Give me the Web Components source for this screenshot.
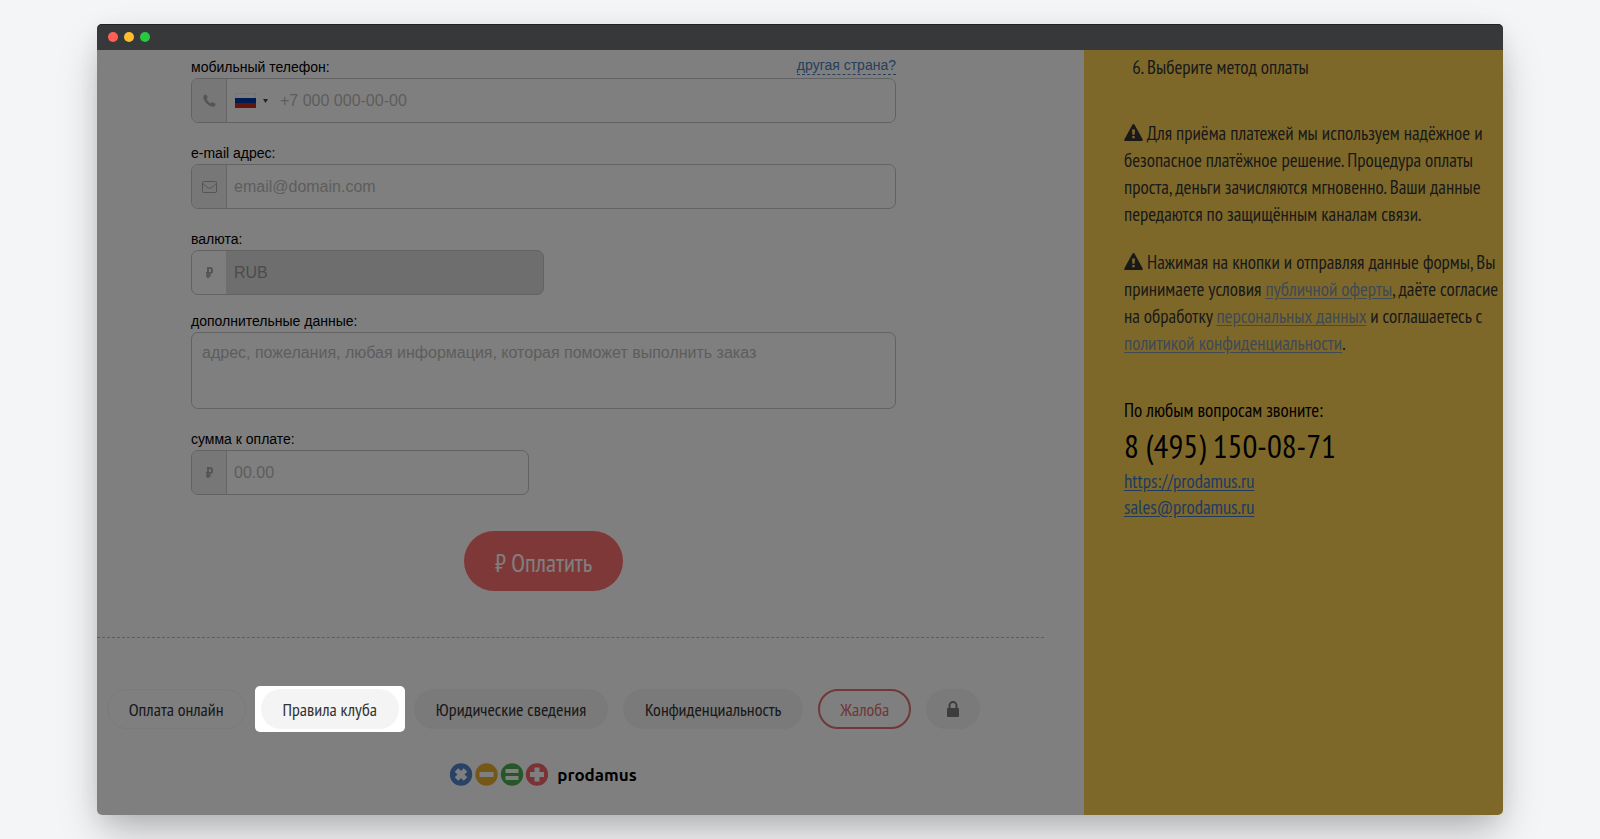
<!DOCTYPE html>
<html lang="ru">
<head>
<meta charset="utf-8">
<meta name="viewport" content="width=device-width, initial-scale=1">
<title>Prodamus</title>
<style>
    body {
        margin: 0;
        background: #f4f5f7;
        font-family: "Liberation Sans", Arial, sans-serif;
        --narrow: "PT Sans Narrow", "Liberation Sans Narrow", "Open Sans", sans-serif;
    }
</style>
</head>
<body>
<payment-page></payment-page>

<script>
const icons = {
    phone: `<svg width="13" height="13" viewBox="0 0 13 13"><path fill="currentColor" d="M1 1.4C1.7.5 2.7.2 3 .5l1.7 2.8c.2.4 0 .7-.3 1l-.9.8c.8 1.800 2.400 3.500 4.300 4.400l.9-1c.3-.3.6-.4 1-.2l2.800 1.500c.4.3.2 1.200-.5 1.900-1 1-2.300 1.200-3.700.7C4.800 11.200 1.800 8.200.6 4.700.2 3.500.2 2.300 1 1.400z"/></svg>`,
    mail: `<svg width="15" height="12" viewBox="0 0 15 12" fill="none" stroke="currentColor"><rect x=".5" y=".5" width="14" height="11" rx="1"/><path d="M.8 2.500c2 2 3.800 3.200 5.200 4.300 1 .8 2 .8 3 0 1.400-1.100 3.200-2.300 5.200-4.300"/></svg>`,
    ruble: `<svg width="7" height="11" viewBox="0 0 7 11" fill="none" stroke="currentColor" stroke-width="2"><path d="M2 11V1h2a2 2.200 0 0 1 0 5H0M0 8.500h5" /></svg>`,
    lock: `<svg width="14" height="16" viewBox="0 0 14 16"><path d="M3.500 8V4.800a3.500 3.800 0 0 1 7 0V8" fill="none" stroke="currentColor" stroke-width="2"/><rect x="1" y="7" width="12" height="9" rx="1" fill="currentColor"/></svg>`,
    warning: `<svg width="19" height="17" viewBox="0 0 19 17"><path fill="currentColor" fill-rule="evenodd" d="M9.500 0c.5 0 .9.3 1.100.7l8 14.600c.5.800-.1 1.700-1 1.700H1.400c-.9 0-1.500-.9-1-1.700l8-14.600c.2-.4.600-.7 1.100-.7zM8 5.500l.4 5.300h2.200l.4-5.300zM8.300 12v2.300h2.400V12z"/></svg>`
};

class BrowserWindow extends HTMLElement {
    constructor() {
        super();
        this.attachShadow({ mode: "open" }).innerHTML = `
            <style>
                :host {
                    display: flex;
                    flex-direction: column;
                    border-radius: 5px;
                    box-shadow: 0 20px 40px -6px rgba(0, 0, 0, .28), 0 4px 20px rgba(0, 0, 0, .06);
                }
                .bar {
                    display: flex;
                    align-items: center;
                    gap: 6px;
                    height: 26px;
                    padding-left: 11px;
                    background: #37383a;
                    border-radius: 5px 5px 0 0;
                    box-shadow: inset 0 1px #222325;
                }
                .dot { width: 10px; height: 10px; border-radius: 50%; }
                .close { background: #ff5f57; }
                .min { background: #febc2e; }
                .max { background: #28c840; }
                .content {
                    flex: 1;
                    display: grid;
                    grid-template-columns: minmax(0, 1fr) 419px;
                    overflow: hidden;
                    background: #fff;
                    border-radius: 0 0 5px 5px;
                }
            </style>
            <div class="bar">
                <span class="dot close"></span><span class="dot min"></span><span class="dot max"></span>
            </div>
            <div class="content"><slot></slot></div>
        `;
    }
}
customElements.define("browser-window", BrowserWindow);

class FormField extends HTMLElement {
    connectedCallback() {
        this.attachShadow({ mode: "open" });
        this.render();
    }

    render() {
        const icon = this.getAttribute("icon");
        const placeholder = this.getAttribute("placeholder") || "";
        const value = this.getAttribute("value");
        const type = this.getAttribute("type") || "text";

        this.shadowRoot.innerHTML = `
            <style>
                :host { display: block; }
                .head {
                    display: flex;
                    justify-content: space-between;
                    font-size: 14px;
                    line-height: 22px;
                }
                .box {
                    display: flex;
                    box-sizing: border-box;
                    height: 45px;
                    overflow: hidden;
                    border: 1px solid #c4c4c4;
                    border-radius: 7px;
                }
                .addon {
                    flex: none;
                    display: flex;
                    align-items: center;
                    justify-content: center;
                    width: 34px;
                    color: #aaa;
                    background: #eee;
                    border-right: 1px solid #ccc;
                }
                input, textarea {
                    flex: 1;
                    min-width: 0;
                    padding: 0 7px;
                    border: 0;
                    outline: 0;
                    background: none;
                    color: #999;
                    font: 16px "Liberation Sans", Arial, sans-serif;
                }
                textarea { padding: 11px 10px; resize: none; }
                ::placeholder { color: #bbb; opacity: 1; }
                :host([multiline]) .box { height: 77px; }
                :host([locked]) .box { background: #dcdcdc; }
                :host([locked]) .addon { background: #fcfcfc; border-color: #dcdcdc; }
            </style>
            <div class="head">
                <label for="control">${this.getAttribute("label")}</label>
                <slot name="hint"></slot>
            </div>
            <div class="box">
                ${icon ? `<span class="addon">${icons[icon]}</span>` : ""}
                <slot name="prefix"></slot>
                ${this.hasAttribute("multiline")
                    ? `<textarea id="control" placeholder="${placeholder}"></textarea>`
                    : `<input id="control" type="${type}" placeholder="${placeholder}" ${value ? `value="${value}" readonly` : ""}>`
                }
            </div>
        `;
    }
}
customElements.define("form-field", FormField);

class CountryButton extends HTMLElement {
    constructor() {
        super();
        this.attachShadow({ mode: "open" }).innerHTML = `
            <style>
                :host { display: flex; }
                button {
                    display: flex;
                    align-items: center;
                    gap: 7px;
                    padding: 0 5px 0 8px;
                    border: 0;
                    background: none;
                }
            </style>
            <button type="button" aria-label="Россия">
                <svg width="21" height="15" viewBox="0 0 21 15">
                    <path fill="#fff" d="M0 0h21v5H0z"/>
                    <path fill="none" stroke="#eee" d="M.5 5V.5h20V5"/>
                    <path fill="#0039a6" d="M0 5h21v5H0z"/>
                    <path fill="#c02a22" d="M0 10h21v5H0z"/>
                </svg>
                <svg width="5" height="4" viewBox="0 0 5 4"><path fill="#444" d="M0 0h5L2.500 4z"/></svg>
            </button>
        `;
    }
}
customElements.define("country-button", CountryButton);

class PaymentForm extends HTMLElement {
    constructor() {
        super();
        this.attachShadow({ mode: "open" }).innerHTML = `
            <style>
                :host { display: block; }
                form {
                    display: flex;
                    flex-direction: column;
                    gap: 19px;
                    padding: 6px 94px 46px;
                }
                .currency { width: 50%; margin-bottom: -4px; }
                .sum { width: 48%; }
                .other {
                    height: 18px;
                    color: #4a80b8;
                    line-height: 19px;
                    text-decoration: none;
                    border-bottom: 1px dashed #4a80b8;
                }
                .pay {
                    align-self: center;
                    height: 60px;
                    margin-top: 17px;
                    padding: 3px 31px 0;
                    border: 0;
                    border-radius: 30px;
                    background: #ff7070;
                    color: #fff;
                    font: 25px var(--narrow);
                }
            </style>
            <form>
                <form-field label="мобильный телефон:" type="tel" icon="phone" placeholder="+7 000 000-00-00">
                    <a class="other" slot="hint" href="#">другая страна?</a>
                    <country-button slot="prefix"></country-button>
                </form-field>
                <form-field label="e-mail адрес:" type="email" icon="mail" placeholder="email@domain.com"></form-field>
                <form-field class="currency" label="валюта:" icon="ruble" value="RUB" locked></form-field>
                <form-field label="дополнительные данные:" placeholder="адрес, пожелания, любая информация, которая поможет выполнить заказ" multiline></form-field>
                <form-field class="sum" label="сумма к оплате:" icon="ruble" placeholder="00.00"></form-field>
                <button class="pay" type="button">₽ Оплатить</button>
            </form>
        `;
    }
}
customElements.define("payment-form", PaymentForm);

class PillLink extends HTMLElement {
    constructor() {
        super();
        this.attachShadow({ mode: "open" }).innerHTML = `
            <style>
                :host { display: block; position: relative; }
                a {
                    display: flex;
                    align-items: center;
                    box-sizing: border-box;
                    height: 40px;
                    padding: 0 22px;
                    border-radius: 20px;
                    background: #f4f4f4;
                    color: #333;
                    font: 18px var(--narrow);
                    white-space: nowrap;
                    text-decoration: none;
                }
                :host([plain]) a { background: #fff; border: 1px solid #f4f4f4; padding: 0 21px; }
                :host([danger]) a { background: none; border: 2px solid #e07070; padding: 0 20px; color: #e07070; }
                :host([small]) a { padding: 0 20px; }
                /* the spotlight darkens everything round the active link */
                :host([active]) { z-index: 1; }
                :host([active])::before {
                    content: "";
                    position: absolute;
                    inset: -3px -6px;
                    z-index: -1;
                    border-radius: 5px;
                    background: #fff;
                    box-shadow: 0 0 0 3000px rgba(0, 0, 0, .5);
                }
            </style>
            <a href="#"><slot></slot></a>
        `;
    }
}
customElements.define("pill-link", PillLink);

class PageFooter extends HTMLElement {
    constructor() {
        super();
        this.attachShadow({ mode: "open" }).innerHTML = `
            <style>
                :host { display: block; }
                nav { display: flex; justify-content: center; gap: 15px; }
                .lock { display: flex; padding: 0 0 1px; color: #7a7a7a; }
                .logo {
                    display: flex;
                    align-items: center;
                    justify-content: center;
                    gap: 9px;
                    padding: 34px 0 28px;
                    color: #000;
                    font: bold 17px/23px Ubuntu, Lato, sans-serif;
                    text-decoration: none;
                }
            </style>
            <nav>
                <pill-link plain>Оплата онлайн</pill-link>
                <pill-link active>Правила клуба</pill-link>
                <pill-link>Юридические сведения</pill-link>
                <pill-link>Конфиденциальность</pill-link>
                <pill-link danger>Жалоба</pill-link>
                <pill-link small aria-label="Безопасность"><span class="lock">${icons.lock}</span></pill-link>
            </nav>
            <a class="logo" href="#">
                <svg width="98" height="23" viewBox="0 0 98 23">
                    <circle cx="11" cy="11.500" r="11.200" fill="#5286cc"/>
                    <circle cx="36.500" cy="11.500" r="11.200" fill="#eab030"/>
                    <circle cx="62" cy="11.500" r="11.200" fill="#4fae50"/>
                    <circle cx="87" cy="11.500" r="11.200" fill="#f46468"/>
                    <g stroke="#fff" fill="none">
                        <path stroke-width="5" d="M6.500 7l9 9M15.500 7l-9 9"/>
                        <path stroke-width="5" d="M29.500 11.500h14"/>
                        <path stroke-width="4" d="M55.500 8h13M55.500 15h13"/>
                        <path stroke-width="5" d="M80 11.500h14M87 4.500v14"/>
                    </g>
                </svg>
                <span>prodamus</span>
            </a>
        `;
    }
}
customElements.define("page-footer", PageFooter);

class SideInfo extends HTMLElement {
    constructor() {
        super();
        this.attachShadow({ mode: "open" }).innerHTML = `
            <style>
                :host {
                    display: block;
                    box-sizing: border-box;
                    padding: 4px 4px 20px 40px;
                    background: #fad054;
                    color: #333;
                    font: 19px/27px var(--narrow);
                }
                ol { margin: 0 0 39px; padding-left: 23px; }
                p { margin: 0 0 21px; white-space: nowrap; }
                svg { vertical-align: -1px; }
                a { color: #7e94a8; text-underline-offset: 2px; }
                address {
                    margin-top: 40px;
                    color: #000;
                    font-style: normal;
                    line-height: 26px;
                }
                address a { color: #3c76c4; }
                .phone { font-size: 33px; line-height: 45px; }
            </style>
            <ol start="6"><li>Выберите метод оплаты</li></ol>
            <p>${icons.warning} Для приёма платежей мы используем надёжное и<br>
                безопасное платёжное решение. Процедура оплаты<br>
                проста, деньги зачисляются мгновенно. Ваши данные<br>
                передаются по защищённым каналам связи.</p>
            <p>${icons.warning} Нажимая на кнопки и отправляя данные формы, Вы<br>
                принимаете условия <a href="#">публичной оферты</a>, даёте согласие<br>
                на обработку <a href="#">персональных данных</a> и соглашаетесь с<br>
                <a href="#">политикой конфиденциальности</a>.</p>
            <address>
                <div>По любым вопросам звоните:</div>
                <div class="phone">8 (495) 150-08-71</div>
                <div><a href="#">https://prodamus.ru</a></div>
                <div><a href="#">sales@prodamus.ru</a></div>
            </address>
        `;
    }
}
customElements.define("side-info", SideInfo);

class PaymentPage extends HTMLElement {
    constructor() {
        super();
        this.attachShadow({ mode: "open" }).innerHTML = `
            <style>
                :host {
                    display: flex;
                    flex-direction: column;
                    box-sizing: border-box;
                    min-height: 100vh;
                    padding: 24px 97px;
                }
                browser-window { flex: 1; }
                main { padding-right: 40px; }
                payment-form, page-footer { margin-right: 54px; }
                hr {
                    margin: 0 0 51px;
                    border: 0;
                    border-top: 1px dashed #bbb;
                }
            </style>
            <browser-window>
                <main>
                    <payment-form></payment-form>
                    <hr>
                    <page-footer></page-footer>
                </main>
                <side-info></side-info>
            </browser-window>
        `;
    }
}
customElements.define("payment-page", PaymentPage);
</script>
</body>
</html>
